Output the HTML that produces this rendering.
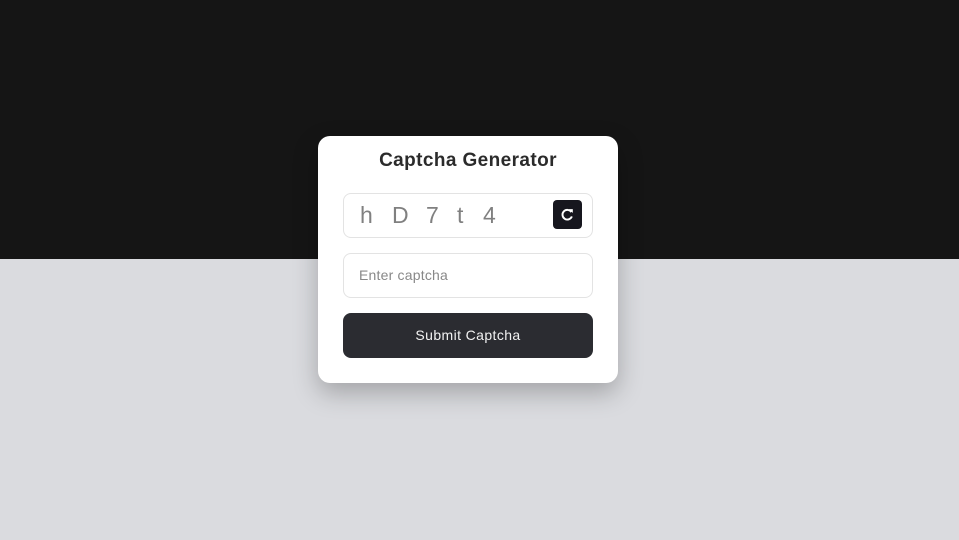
<!DOCTYPE html>
<html><head><meta charset="utf-8"><style>
*{box-sizing:border-box;margin:0;padding:0}
body{width:959px;height:540px;overflow:hidden;font-family:"Liberation Sans",sans-serif;background:#dadbdf;position:relative}
.top{position:absolute;left:0;top:0;width:959px;height:259px;background:#151515}
.card{position:absolute;left:318px;top:136px;width:300px;height:247px;background:#fff;border-radius:12px;box-shadow:0 10px 25px rgba(0,0,0,0.25)}
h1{position:absolute;left:0;top:14px;width:300px;text-align:center;font-size:19px;font-weight:bold;color:#2b2b2b;letter-spacing:0.4px}
.cap{position:absolute;left:25px;top:57px;width:250px;height:45px;border:1px solid #e3e3e3;border-radius:8px}
.cap span{position:absolute;top:8px;font-size:23px;color:#808080;letter-spacing:0.5px}
.btnr{position:absolute;left:209px;top:6px;width:29px;height:29px;background:#16161e;border-radius:4px}
.inp{position:absolute;left:25px;top:117px;width:250px;height:45px;border:1px solid #e3e3e3;border-radius:8px;font-size:14px;color:#888;padding:13px 0 0 15px;letter-spacing:0.2px}
.sub{position:absolute;left:25px;top:177px;width:250px;height:45px;background:#2b2c31;border-radius:8px;color:#f2f2f2;font-size:14px;text-align:center;line-height:45px;letter-spacing:0.4px}
</style></head><body>
<div class="top"></div>
<div class="card">
<h1>Captcha Generator</h1>
<div class="cap">
<span style="left:16px">h</span><span style="left:48px">D</span><span style="left:82px">7</span><span style="left:113px">t</span><span style="left:139px">4</span>
<div class="btnr"><svg width="29" height="29" viewBox="0 0 30 30"><path d="M19 12.5A5 5 0 1 0 19.5 17" fill="none" stroke="#fff" stroke-width="2"/><path d="M16.5 9.5L20.5 9.5L20.5 13.5Z" fill="#fff"/></svg></div>
</div>
<div class="inp">Enter captcha</div>
<div class="sub">Submit Captcha</div>
</div>
</body></html>
